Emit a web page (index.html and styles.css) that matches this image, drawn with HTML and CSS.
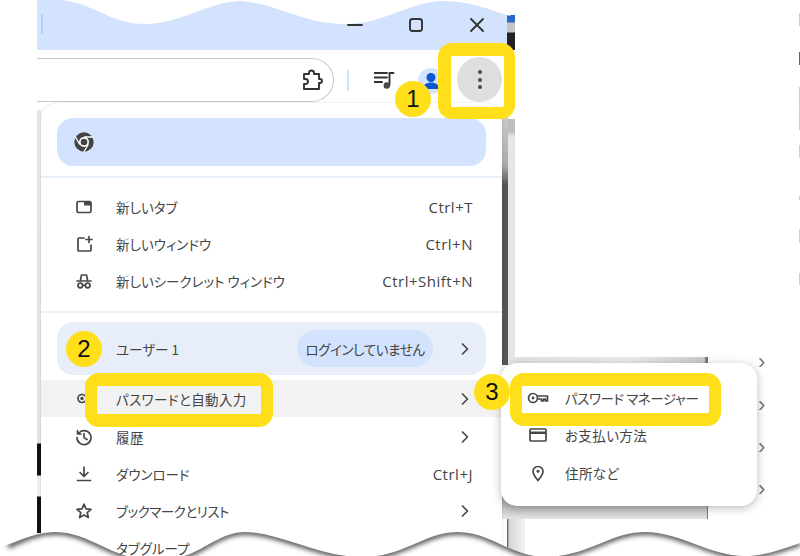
FILE: index.html
```html
<!DOCTYPE html>
<html lang="ja">
<head>
<meta charset="utf-8">
<title>Chrome メニュー</title>
<link rel="stylesheet" href="styles.css">
</head>
<body>
<div class="stage">
  <div class="edge-strip"></div>
  <div class="left-strip"></div>
  <div class="top-strip"></div>
  <div class="right-dark"></div>
  <div class="right-light"></div>
  <div class="shelf"></div>
  <div class="under-sub"></div>
  <div class="under-left"></div>
  <div class="blank"></div>
  <span class="far-chev c1">›</span><span class="far-chev c2">›</span><span class="far-chev c3">›</span><span class="far-chev c4">›</span>

  <div class="browser">
    <div class="titlebar">
      <span class="tab-sep"></span>
      <div class="controls">
        <span class="ctl"><svg width="16" height="16" viewBox="0 0 16 16"><path d="M1 8h14" class="ink2"/></svg></span>
        <span class="ctl"><svg width="16" height="16" viewBox="0 0 16 16"><rect x="2" y="2" width="12" height="12" rx="2.5" class="ink2"/></svg></span>
        <span class="ctl"><svg width="16" height="16" viewBox="0 0 16 16"><path d="M2 2l12 12M14 2L2 14" class="ink2"/></svg></span>
      </div>
    </div>
    <div class="toolbar">
      <div class="address">
        <svg width="24" height="24" viewBox="0 0 24 24"><path d="M4 6h5V5a2.500 2.500 0 0 1 5 0v1h5v5h1a2 2 0 0 1 0 4h-1v6H4v-5h1.500a2.500 2.500 0 0 0 0-5H4z" class="ink2"/></svg>
      </div>
      <span class="tool-sep"></span>
      <svg class="media" width="21" height="18" viewBox="0 0 21 18"><path d="M0 2h13M0 6.500h13M0 11h8" class="ink2"/><path d="M15.500 14V2h4" class="ink2"/><circle cx="12.800" cy="14.500" r="3.200" fill="#474747"/></svg>
      <span class="avatar"><svg width="26" height="26" viewBox="0 0 26 26"><circle cx="13" cy="9.500" r="4.500" fill="#0b57d0"/><path d="M4.500 21c0-4 4-6.500 8.500-6.500s8.500 2.500 8.500 6.500z" fill="#0b57d0"/></svg></span>
      <span class="more"><i></i><i></i><i></i></span>
    </div>
  </div>

  <div class="menu">
    <div class="banner">
      <svg width="22" height="22" viewBox="0 0 22 22"><circle cx="11" cy="11" r="9.700" fill="#444"/><circle cx="11" cy="11" r="5" fill="#fff"/><circle cx="11" cy="11" r="3.300" fill="#444"/><path d="M11 6h9M6.700 13.500L2.300 5.800M15.300 13.500L10.800 21" stroke="#fff" stroke-width="1.300" fill="none"/></svg>
    </div>
    <div class="divider first"></div>
    <div class="row">
      <svg class="ico" width="18" height="18" viewBox="0 0 18 18"><rect x="2" y="3.500" width="14" height="11" rx="1.500" class="ink"/><path d="M9 3.500h7v4H9z" fill="#474747"/></svg>
      <span class="label">新しいタブ</span><span class="key">Ctrl+T</span>
    </div>
    <div class="row">
      <svg class="ico" width="18" height="18" viewBox="0 0 18 18"><path d="M9 3H4a1 1 0 0 0-1 1v11a1 1 0 0 0 1 1h11a1 1 0 0 0 1-1v-5" class="ink"/><path d="M14 1.500v6M11 4.500h6" class="ink"/></svg>
      <span class="label">新しいウィンドウ</span><span class="key">Ctrl+N</span>
    </div>
    <div class="row">
      <svg class="ico" width="18" height="18" viewBox="0 0 18 18"><path d="M5.500 8l1-5h5l1 5M2 9h14" class="ink"/><circle cx="5.300" cy="13.500" r="2.300" class="ink"/><circle cx="12.700" cy="13.500" r="2.300" class="ink"/><path d="M7.800 13.300h2.400" class="ink"/></svg>
      <span class="label">新しいシークレット ウィンドウ</span><span class="key">Ctrl+Shift+N</span>
    </div>
    <div class="divider"></div>
    <div class="profile">
      <span class="label">ユーザー 1</span>
      <span class="pill">ログインしていません</span>
      <svg class="chev" width="10" height="14" viewBox="0 0 10 14"><path d="M2.500 2l5 5-5 5" class="ink"/></svg>
    </div>
    <div class="row hover">
      <svg class="ico" width="18" height="18" viewBox="0 0 18 18"><circle cx="7" cy="8.500" r="4" class="ink"/><circle cx="7" cy="8.500" r="1.700" fill="#474747"/></svg>
      <span class="label wide">パスワードと自動入力</span>
      <svg class="chev" width="10" height="14" viewBox="0 0 10 14"><path d="M2.500 2l5 5-5 5" class="ink"/></svg>
    </div>
    <div class="row">
      <svg class="ico" width="18" height="18" viewBox="0 0 18 18"><path d="M3.600 5.200A7 7 0 1 1 2 9.500M2.500 2.500v3.500H6M9 5.500v4l3 2" class="ink"/></svg>
      <span class="label wide">履歴</span>
      <svg class="chev" width="10" height="14" viewBox="0 0 10 14"><path d="M2.500 2l5 5-5 5" class="ink"/></svg>
    </div>
    <div class="row">
      <svg class="ico" width="18" height="18" viewBox="0 0 18 18"><path d="M9 2v9M5 7.500l4 4 4-4M2.500 15.500h13" class="ink"/></svg>
      <span class="label">ダウンロード</span><span class="key">Ctrl+J</span>
    </div>
    <div class="row">
      <svg class="ico" width="18" height="18" viewBox="0 0 18 18"><path d="M9 2.200l2 4.600 5 .5-3.800 3.300 1.200 4.900L9 13l-4.400 2.500 1.200-4.900L2 7.300l5-.5z" class="ink"/></svg>
      <span class="label tight">ブックマークとリスト</span>
      <svg class="chev" width="10" height="14" viewBox="0 0 10 14"><path d="M2.500 2l5 5-5 5" class="ink"/></svg>
    </div>
    <div class="row">
      <span class="label with-gap">タブグループ</span>
    </div>
  </div>

  <div class="submenu">
    <div class="sub-row">
      <svg width="22" height="14" viewBox="0 0 22 14"><circle cx="6" cy="7" r="4.500" class="ink"/><circle cx="6" cy="7" r="1.400" fill="#474747"/><path d="M10.500 5h10v5h-2V8h-2v2h-2V8h-3" class="ink"/></svg>
      <span class="label tight">パスワード マネージャー</span>
    </div>
    <div class="sub-row">
      <svg width="22" height="18" viewBox="0 0 22 18"><rect x="3" y="3" width="16" height="12" rx="1" class="ink"/><path d="M3 5.500h16v2.500H3z" fill="#474747"/></svg>
      <span class="label wide">お支払い方法</span>
    </div>
    <div class="sub-row">
      <svg width="22" height="18" viewBox="0 0 22 18"><path d="M11 16.500c-3-3.600-5-6-5-9a5 5 0 0 1 10 0c0 3-2 5.400-5 9z" class="ink"/><circle cx="11" cy="7.300" r="1.500" fill="#474747"/></svg>
      <span class="label wide">住所など</span>
    </div>
  </div>

  <div class="mark mark-more"></div>
  <div class="mark mark-pass"></div>
  <div class="mark mark-mgr"></div>
  <span class="badge b1">1</span>
  <span class="badge b2">2</span>
  <span class="badge b3">3</span>

  <svg class="tear" width="800" height="556" viewBox="0 0 800 556">
    <defs>
      <filter id="soft" x="-5%" y="-50%" width="110%" height="200%"><feGaussianBlur stdDeviation="2.500"/></filter>
      <clipPath id="below"><path d="M0 547C20 541 35 532 55 532C85 532 105 552 135 558C160 562 180 558 190 554C210 545 225 532 245 532C280 532 320 558 365 557C405 556 425 532 458 532C490 532 510 556 545 557C590 556 610 532 645 532C680 532 710 556 745 556C765 556 785 548 800 543V560H0Z"/></clipPath>
    </defs>
    <path d="M30 0H60C95 3 110 24 145 24C180 24 205 3 240 1C275 3 305 24 344 24C385 24 410 1 444 1C470 1 490 10 510 16V0Z" fill="#fff"/>
    <path d="M0 547C20 541 35 532 55 532C85 532 105 552 135 558C160 562 180 558 190 554C210 545 225 532 245 532C280 532 320 558 365 557C405 556 425 532 458 532C490 532 510 556 545 557C590 556 610 532 645 532C680 532 710 556 745 556C765 556 785 548 800 543V560H0Z" fill="#fff"/>
    <g clip-path="url(#below)">
      <path d="M8 546C20 541 35 532 55 532C85 532 105 552 135 558C160 562 180 558 190 554C210 545 225 532 245 532C280 532 320 558 365 557C405 556 425 532 458 532C490 532 510 556 545 557C590 556 610 532 645 532C680 532 710 556 745 556C765 556 785 548 800 543" fill="none" stroke="#3c3c3c" stroke-width="5" filter="url(#soft)"/>
    </g>
  </svg>
</div>
</body>
</html>
```
FILE: styles.css
```css
* { box-sizing: border-box; }
html, body { margin: 0; padding: 0; background: #fff; }
body {
  font-family: "Noto Sans CJK JP", "Noto Sans", sans-serif;
  font-size: 13.5px;
  color: #444;
}
.stage { position: relative; width: 800px; height: 556px; overflow: hidden; background: #fff; }
.ink { fill: none; stroke: #474747; stroke-width: 1.7; stroke-linecap: round; stroke-linejoin: round; }
.ink2 { fill: none; stroke: #333; stroke-width: 1.900; stroke-linecap: round; stroke-linejoin: round; }

/* Edges of the windows peeking out behind the menu */
.edge-strip {
  position: absolute; left: 799px; top: 0; width: 1px; height: 300px;
  background: linear-gradient(#fff 13px, #ccc 13px, #ccc 26px, #fff 26px, #fff 52px, #666 52px, #666 65px, #fff 65px, #fff 87px, #ccc 87px, #ccc 103px, #fc6 103px, #fc6 116px, #ccc 116px, #ccc 130px, #fff 130px, #fff 145px, #fc6 145px, #fc6 158px, #fff 158px, #fff 196px, #fc6 196px, #fc6 200px, #fff 200px, #fff 229px, #fc6 229px, #fc6 243px, #fff 243px, #fff 273px, #fc6 273px, #fc6 285px, #fff 285px);
}
.left-strip {
  position: absolute; left: 37px; top: 101px; width: 4px; height: 432px;
  background: linear-gradient(#ccc 2px, #e6e6e6 2px, #e3e3e3 342px, #111 343px, #111 374px, #eee 375px, #eee 395px, #111 396px, #111 431px);
}
.top-strip {
  position: absolute; left: 507px; top: 15px; width: 8px; height: 35px;
  background: linear-gradient(#2a67c9 7px, #c4c4c4 8px, #c4c4c4 17px, #222 18px, #222 35px);
}
.right-dark {
  position: absolute; left: 502px; top: 100px; width: 6px; height: 265px;
  background: linear-gradient(#d4d4d4, #aaa 65px, #555 85px, #555 265px);
}
.right-light {
  position: absolute; left: 508px; top: 119px; width: 7px; height: 246px;
  background: linear-gradient(#bdbdbd 12px, #e6e6e6 18px);
}
.shelf {
  position: absolute; left: 515px; top: 357px; width: 193px; height: 7px;
  background: linear-gradient(90deg, #e4e4e4, #ececec 60%, #cdcdcd 98%, #777 99%);
}
.under-sub {
  position: absolute; left: 502px; top: 495px; width: 206px; height: 24px;
  background: linear-gradient(#9d9d9d, #e4e4e4);
  border-right: 1px solid #777;
}
.under-left {
  position: absolute; left: 502px; top: 519px; width: 23px; height: 37px;
  background: linear-gradient(90deg, #fff 5px, #666 5px, #777 6px, #d6d6d6 7px, #f2f2f2 100%);
}
.blank { position: absolute; left: 525px; top: 519px; width: 275px; height: 37px; background: #fff; }
.far-chev { position: absolute; left: 758px; font-size: 22px; line-height: 22px; color: #777; font-family: "Liberation Sans", sans-serif; }
.c1 { top: 351px; } .c2 { top: 394px; } .c3 { top: 436px; } .c4 { top: 478px; }

/* Browser window */
.browser { position: absolute; left: 37px; top: 0; width: 470px; }
.titlebar { display: flex; align-items: center; height: 50px; background: #d3e3fd; }
.tab-sep { width: 2px; height: 20px; margin: -3px 0 0 4px; background: #b3cffb; }
.controls { display: flex; margin-left: auto; }
.ctl { display: flex; justify-content: center; align-items: center; width: 61px; height: 50px; }
.ctl svg { margin-bottom: 1px; }
.toolbar { display: flex; align-items: flex-start; height: 60px; background: #fff; }
.address {
  display: flex; align-items: center; justify-content: flex-end;
  width: 297px; height: 44px; margin-top: 8px; padding-right: 9px;
  border: 1.500px solid #c8c8c8; border-left: 0; border-radius: 0 22px 22px 0;
}
.tool-sep { width: 2px; height: 21px; margin: 20px 0 0 13px; background: #d3e3fd; }
.media { margin: 21px 0 0 25px; }
.avatar {
  display: block; width: 26px; height: 26px; margin: 18px 0 0 23px; border-radius: 50%;
  background: #d3e3fd;
}
.avatar svg { display: block; }
.more {
  display: flex; flex-direction: column; align-items: center; justify-content: center; gap: 3.500px;
  flex: none; width: 45px; height: 45px; margin: 7px 0 0 13px; border-radius: 50%; background: #dedede;
}
.more i { display: block; width: 4px; height: 4px; border-radius: 50%; background: #474747; }

/* Main menu */
.menu {
  position: absolute; left: 41px; top: 103px; width: 461px; height: 470px;
  padding-top: 15px; background: #fff; border-radius: 16px 16px 0 0;
  box-shadow: 0 0 2px rgba(0,0,0,.2);
}
.banner {
  display: flex; align-items: center; height: 48px; margin: 0 16px; padding-left: 16px;
  background: #d3e3fd; border-radius: 16px;
}
.divider { height: 2px; margin: 12px 0 9px; background: #e8effb; }
.divider.first { margin: 10px 0; }
.row { display: flex; align-items: center; height: 37px; padding: 0 29px 0 34px; }
.row.hover { margin-top: 5px; background: #f2f2f2; margin-bottom: 1px; }
.ico { flex: none; }
.label { margin-left: 23px; font-feature-settings: "palt"; white-space: nowrap; }
.wide { letter-spacing: .4px; }
.tight { letter-spacing: -.45px; }
.sub-row .label { margin-left: 16px; }
.key { margin-left: auto; font-family: "Open Sans", sans-serif; font-size: 15px; letter-spacing: .5px; }
.chev { margin-left: auto; flex: none; margin-right: 3px; }
.profile {
  display: flex; align-items: center; height: 53px; margin: 0 16px; padding: 0 13px 0 36px;
  background: #e8eef9; border-radius: 16px;
}
.profile .label { margin-left: 23px; }
.pill {
  display: flex; align-items: center; justify-content: center; width: 136px; height: 37px;
  margin-left: auto; border-radius: 19px; background: #d3e3fd; font-feature-settings: "palt"; letter-spacing: -.4px;
}
.profile .chev { margin-left: 27px; }
.with-gap { margin-left: 41px; }

/* Sub menu */
.submenu {
  position: absolute; left: 501px; top: 363px; width: 256px; height: 143px; padding-top: 16px;
  background: #fff; border-radius: 16px; box-shadow: 0 2px 10px rgba(0,0,0,.28);
}
.sub-row { display: flex; align-items: center; height: 37.500px; padding-left: 26px; }

/* Yellow annotations */
.mark { position: absolute; border: 12px solid #fedf1a; border-radius: 14px; }
.mark-more { left: 438px; top: 43px; width: 77px; height: 76px; border-width: 13px 11px 12px 13px; }
.mark-pass { left: 85px; top: 373px; width: 188px; height: 54px; border-width: 13px 12px; }
.mark-mgr { left: 510px; top: 373px; width: 211px; height: 53px; border-width: 13px 12px; }
.badge {
  position: absolute; display: flex; align-items: center; justify-content: center;
  width: 36px; height: 36px; border-radius: 50%; background: #fedf1a; color: #111;
  font-family: "Liberation Sans", sans-serif; font-size: 24px; line-height: 1;
}
.b1 { left: 395px; top: 81px; }
.b2 { left: 66px; top: 331px; }
.b3 { left: 474px; top: 374px; }
.tear { position: absolute; left: 0; top: 0; display: block; pointer-events: none; }
```
